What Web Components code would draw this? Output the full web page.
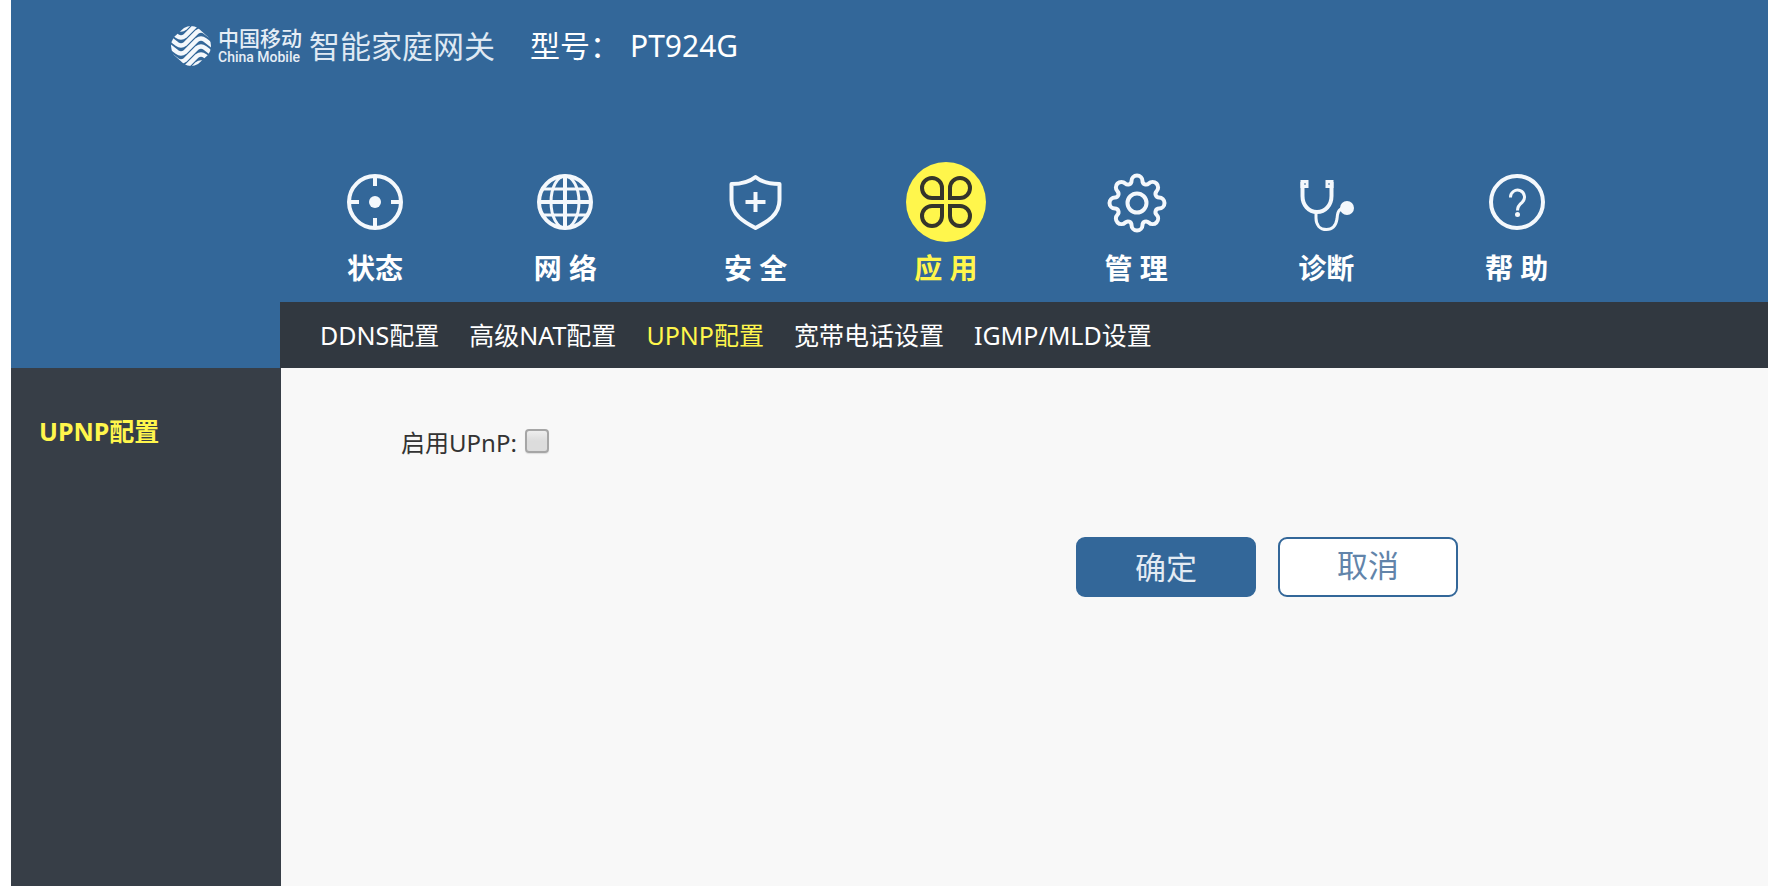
<!DOCTYPE html>
<html lang="zh-CN">
<head>
<meta charset="utf-8">
<title>智能家庭网关</title>
<style>
html, body {
  height: 100%;
  margin: 0;
}
body {
  background: #fff;
  font-family: "Noto Sans", "Noto Sans CJK SC", sans-serif;
  font-size: 24px;
  --blue: #336799;
  --yellow: #fff64c;
}
</style>
</head>
<body>
<gateway-page>
  <gateway-brand slot="brand" model="PT924G"></gateway-brand>
  <nav-item slot="nav" icon="status">状态</nav-item>
  <nav-item slot="nav" icon="network">网 络</nav-item>
  <nav-item slot="nav" icon="security">安 全</nav-item>
  <nav-item slot="nav" icon="apps" active>应 用</nav-item>
  <nav-item slot="nav" icon="manage">管 理</nav-item>
  <nav-item slot="nav" icon="diagnose">诊断</nav-item>
  <nav-item slot="nav" icon="help">帮 助</nav-item>
  <menu-link slot="submenu">DDNS配置</menu-link>
  <menu-link slot="submenu">高级NAT配置</menu-link>
  <menu-link slot="submenu" active>UPNP配置</menu-link>
  <menu-link slot="submenu">宽带电话设置</menu-link>
  <menu-link slot="submenu">IGMP/MLD设置</menu-link>
  <menu-link slot="side" active strong>UPNP配置</menu-link>
  <upnp-form></upnp-form>
</gateway-page>

<script>
const icons = {
  status: `<circle cx="40" cy="40" r="26"/><path d="M40 14v10M40 56v10M14 40h10M56 40h10"/><circle cx="40" cy="40" r="6" fill="currentColor" stroke="none"/>`,
  network: `<circle cx="40" cy="40" r="26"/><path d="M40 14v52M14 40h52"/><path stroke-width="3" d="M18 27h44M18 53h44"/><ellipse stroke-width="3" cx="40" cy="40" rx="14" ry="26"/>`,
  security: `<path stroke-linejoin="round" d="M39.500 15Q48 22 63.500 22V38C63.500 53 51 60 39.500 66C28 60 15.500 53 15.500 38V22Q31 22 39.500 15Z"/><path d="M39.500 30v20M29.500 40h20"/>`,
  apps: `<circle cx="40" cy="40" r="40" fill="#fff64c" stroke="none"/><g stroke="#35352b"><path d="M36 36V26A10 10 0 1 0 26 36Z"/><path d="M44 36V26A10 10 0 1 1 54 36Z"/><path d="M36 44V54A10 10 0 1 1 26 44Z"/><path d="M44 44V54A10 10 0 1 0 54 44Z"/></g>`,
  manage: `<g transform="translate(41 41)"><circle r="9.500"/><path stroke-linejoin="round" d="M22-5.500A5.500 5.500 0 0 1 22 5.500C18.500 5.500 17.500 9.500 19.500 11.700A5.500 5.500 0 0 1 11.700 19.500C9.500 17.500 5.500 18.500 5.500 22A5.500 5.500 0 0 1-5.500 22C-5.500 18.500-9.500 17.500-11.700 19.500A5.500 5.500 0 0 1-19.500 11.700C-17.500 9.500-18.500 5.500-22 5.500A5.500 5.500 0 0 1-22-5.500C-18.500-5.500-17.500-9.500-19.500-11.700A5.500 5.500 0 0 1-11.700-19.500C-9.500-17.500-5.500-18.500-5.500-22A5.500 5.500 0 0 1 5.500-22C5.500-18.500 9.500-17.500 11.700-19.500A5.500 5.500 0 0 1 19.500-11.700C17.500-9.500 18.500-5.500 22-5.500Z"/></g>`,
  diagnose: `<path d="M16.500 20V34C16.500 43 22.500 50 31 50S45.500 43 45.500 34V20"/><path stroke-width="3" d="M16 19.500h5v5h-5zM41 19.500h5v5h-5z"/><path stroke-width="3" d="M30 50V56C30 63 34 67.500 40.500 67.500S50 63 51 57C51.500 51 52 47 58 46"/><circle cx="61" cy="46" r="7" fill="currentColor" stroke="none"/>`,
  help: `<circle cx="40" cy="40" r="26"/><path stroke-width="3" d="M33.500 35.500A7 7 0 1 1 45 40.500Q40.500 44 40.500 48.500"/><circle cx="40.500" cy="52.500" r="2.500" fill="currentColor" stroke="none"/>`
};

class GatewayPage extends HTMLElement {
  constructor() {
    super();
    this.attachShadow({ mode: "open" });
  }

  connectedCallback() {
    this.shadowRoot.innerHTML = `
<style>
:host {
  display: flex;
  flex-direction: column;
  box-sizing: border-box;
  min-height: 100%;
  padding-left: 11px;
}
header {
  background: var(--blue);
  color: #fff;
}
.nav {
  box-sizing: border-box;
  margin-left: 269px;
  padding-top: 70px;
}
.items {
  display: grid;
  grid-template-columns: repeat(7, 1fr);
  width: 89.5%;
}
.submenu {
  display: flex;
  align-items: center;
  gap: 30px;
  margin-left: 269px;
  height: 66px;
  padding-left: 40px;
  background: #313840;
}
.body {
  flex: 1;
  display: flex;
}
aside {
  box-sizing: border-box;
  width: 270px;
  padding: 46px 28px;
  background: #373e47;
}
main {
  flex: 1;
  background: #f8f8f8;
}
</style>
<header>
  <slot name="brand"></slot>
  <nav class="nav"><div class="items"><slot name="nav"></slot></div></nav>
  <nav class="submenu"><slot name="submenu"></slot></nav>
</header>
<div class="body">
  <aside><slot name="side"></slot></aside>
  <main><slot></slot></main>
</div>
`;
  }
}

class GatewayBrand extends HTMLElement {
  constructor() {
    super();
    this.attachShadow({ mode: "open" });
  }

  connectedCallback() {
    // the emblem is one S-shaped ribbon repeated down a round clip
    const ribbons = [-32, -24, -16, -8, 0, 8, 16, 24, 32]
      .map(y => `<path transform="translate(0 ${y})" d="M-8 15L6 26Q10 29 14 26L26 14Q30 11 34 14L48 25"/>`)
      .join("");
    this.shadowRoot.innerHTML = `
<style>
:host {
  display: flex;
  align-items: center;
  height: 92px;
  padding-left: 160px;
  color: #fff;
}
svg {
  width: 40px;
  height: 40px;
}
.company {
  display: flex;
  flex-direction: column;
  margin: 0 7px;
  color: #e6eef6;
}
.cn {
  font-size: 21px;
  font-weight: 500;
  line-height: 22px;
}
.en {
  font: 500 14px/16px Roboto, sans-serif;
}
.product {
  color: #dfe9f3;
  font-size: 31px;
  line-height: 40px;
}
.model {
  display: flex;
  gap: 10px;
  margin-left: 35px;
  font-size: 30px;
  line-height: 40px;
}
</style>
<svg viewBox="0 0 40 40" aria-hidden="true">
  <clipPath id="round"><path d="M13 2Q20-2 27 2L37 11Q43 20 37 29L27 38Q20 42 13 38L3 29Q-3 20 3 11Z"/></clipPath>
  <g clip-path="url(#round)" fill="none" stroke="#f4f8fc" stroke-width="4.500">${ribbons}</g>
</svg>
<div class="company"><span class="cn">中国移动</span><span class="en">China Mobile</span></div>
<div class="product">智能家庭网关</div>
<div class="model"><span>型号：</span><span>${this.getAttribute("model") ?? ""}</span></div>
`;
  }
}

class NavItem extends HTMLElement {
  constructor() {
    super();
    this.attachShadow({ mode: "open" });
  }

  connectedCallback() {
    this.shadowRoot.innerHTML = `
<style>
:host {
  display: block;
}
a {
  display: flex;
  flex-direction: column;
  align-items: center;
  color: #fff;
  font-size: 28px;
  font-weight: bold;
  line-height: 40px;
  padding-bottom: 14px;
  text-decoration: none;
}
:host([active]) a {
  color: var(--yellow);
}
svg {
  width: 80px;
  height: 80px;
  margin-bottom: 6px;
  color: #f4f8fc;
}
</style>
<a href="#">
  <svg viewBox="0 0 80 80" fill="none" stroke="currentColor" stroke-width="4" aria-hidden="true">${icons[this.getAttribute("icon")] ?? ""}</svg>
  <span><slot></slot></span>
</a>
`;
  }
}

class MenuLink extends HTMLElement {
  constructor() {
    super();
    this.attachShadow({ mode: "open" });
  }

  connectedCallback() {
    this.shadowRoot.innerHTML = `
<style>
:host {
  display: block;
  font-size: 25px;
  line-height: 34px;
}
a {
  color: #fff;
  text-decoration: none;
  white-space: nowrap;
}
:host([active]) a {
  color: var(--yellow);
}
:host([strong]) a {
  font-weight: bold;
}
</style>
<a href="#"><slot></slot></a>
`;
  }
}

class UpnpForm extends HTMLElement {
  constructor() {
    super();
    this.attachShadow({ mode: "open" });
  }

  connectedCallback() {
    this.shadowRoot.innerHTML = `
<style>
:host {
  display: block;
  padding-top: 55px;
}
.row {
  display: flex;
  align-items: center;
  gap: 8px;
  height: 36px;
  padding-left: 120px;
  color: #333;
}
input {
  appearance: none;
  box-sizing: border-box;
  width: 24px;
  height: 24px;
  margin: 0;
  border: 2px solid #a6a6a6;
  border-radius: 4px;
  background: linear-gradient(#eee, #dcdcdc 50%);
  box-shadow: 0 1px 1px #ddd;
}
input:checked {
  background: var(--blue);
}
.actions {
  display: flex;
  justify-content: flex-end;
  gap: 22px;
  padding: 78px 310px 0 0;
}
button {
  width: 180px;
  height: 60px;
  padding: 0;
  border: 2px solid var(--blue);
  border-radius: 9px;
  font-family: inherit;
  font-size: 31px;
  line-height: 40px;
}
.ok {
  background: var(--blue);
  color: #e3ebf3;
}
.cancel {
  padding-bottom: 4px;
  background: #fff;
  color: #6284aa;
}
</style>
<form>
  <div class="row">
    <label for="upnp">启用UPnP:</label>
    <input type="checkbox" id="upnp">
  </div>
  <div class="actions">
    <button type="button" class="ok">确定</button>
    <button type="button" class="cancel">取消</button>
  </div>
</form>
`;
  }
}

customElements.define("gateway-page", GatewayPage);
customElements.define("gateway-brand", GatewayBrand);
customElements.define("nav-item", NavItem);
customElements.define("menu-link", MenuLink);
customElements.define("upnp-form", UpnpForm);
</script>
</body>
</html>
